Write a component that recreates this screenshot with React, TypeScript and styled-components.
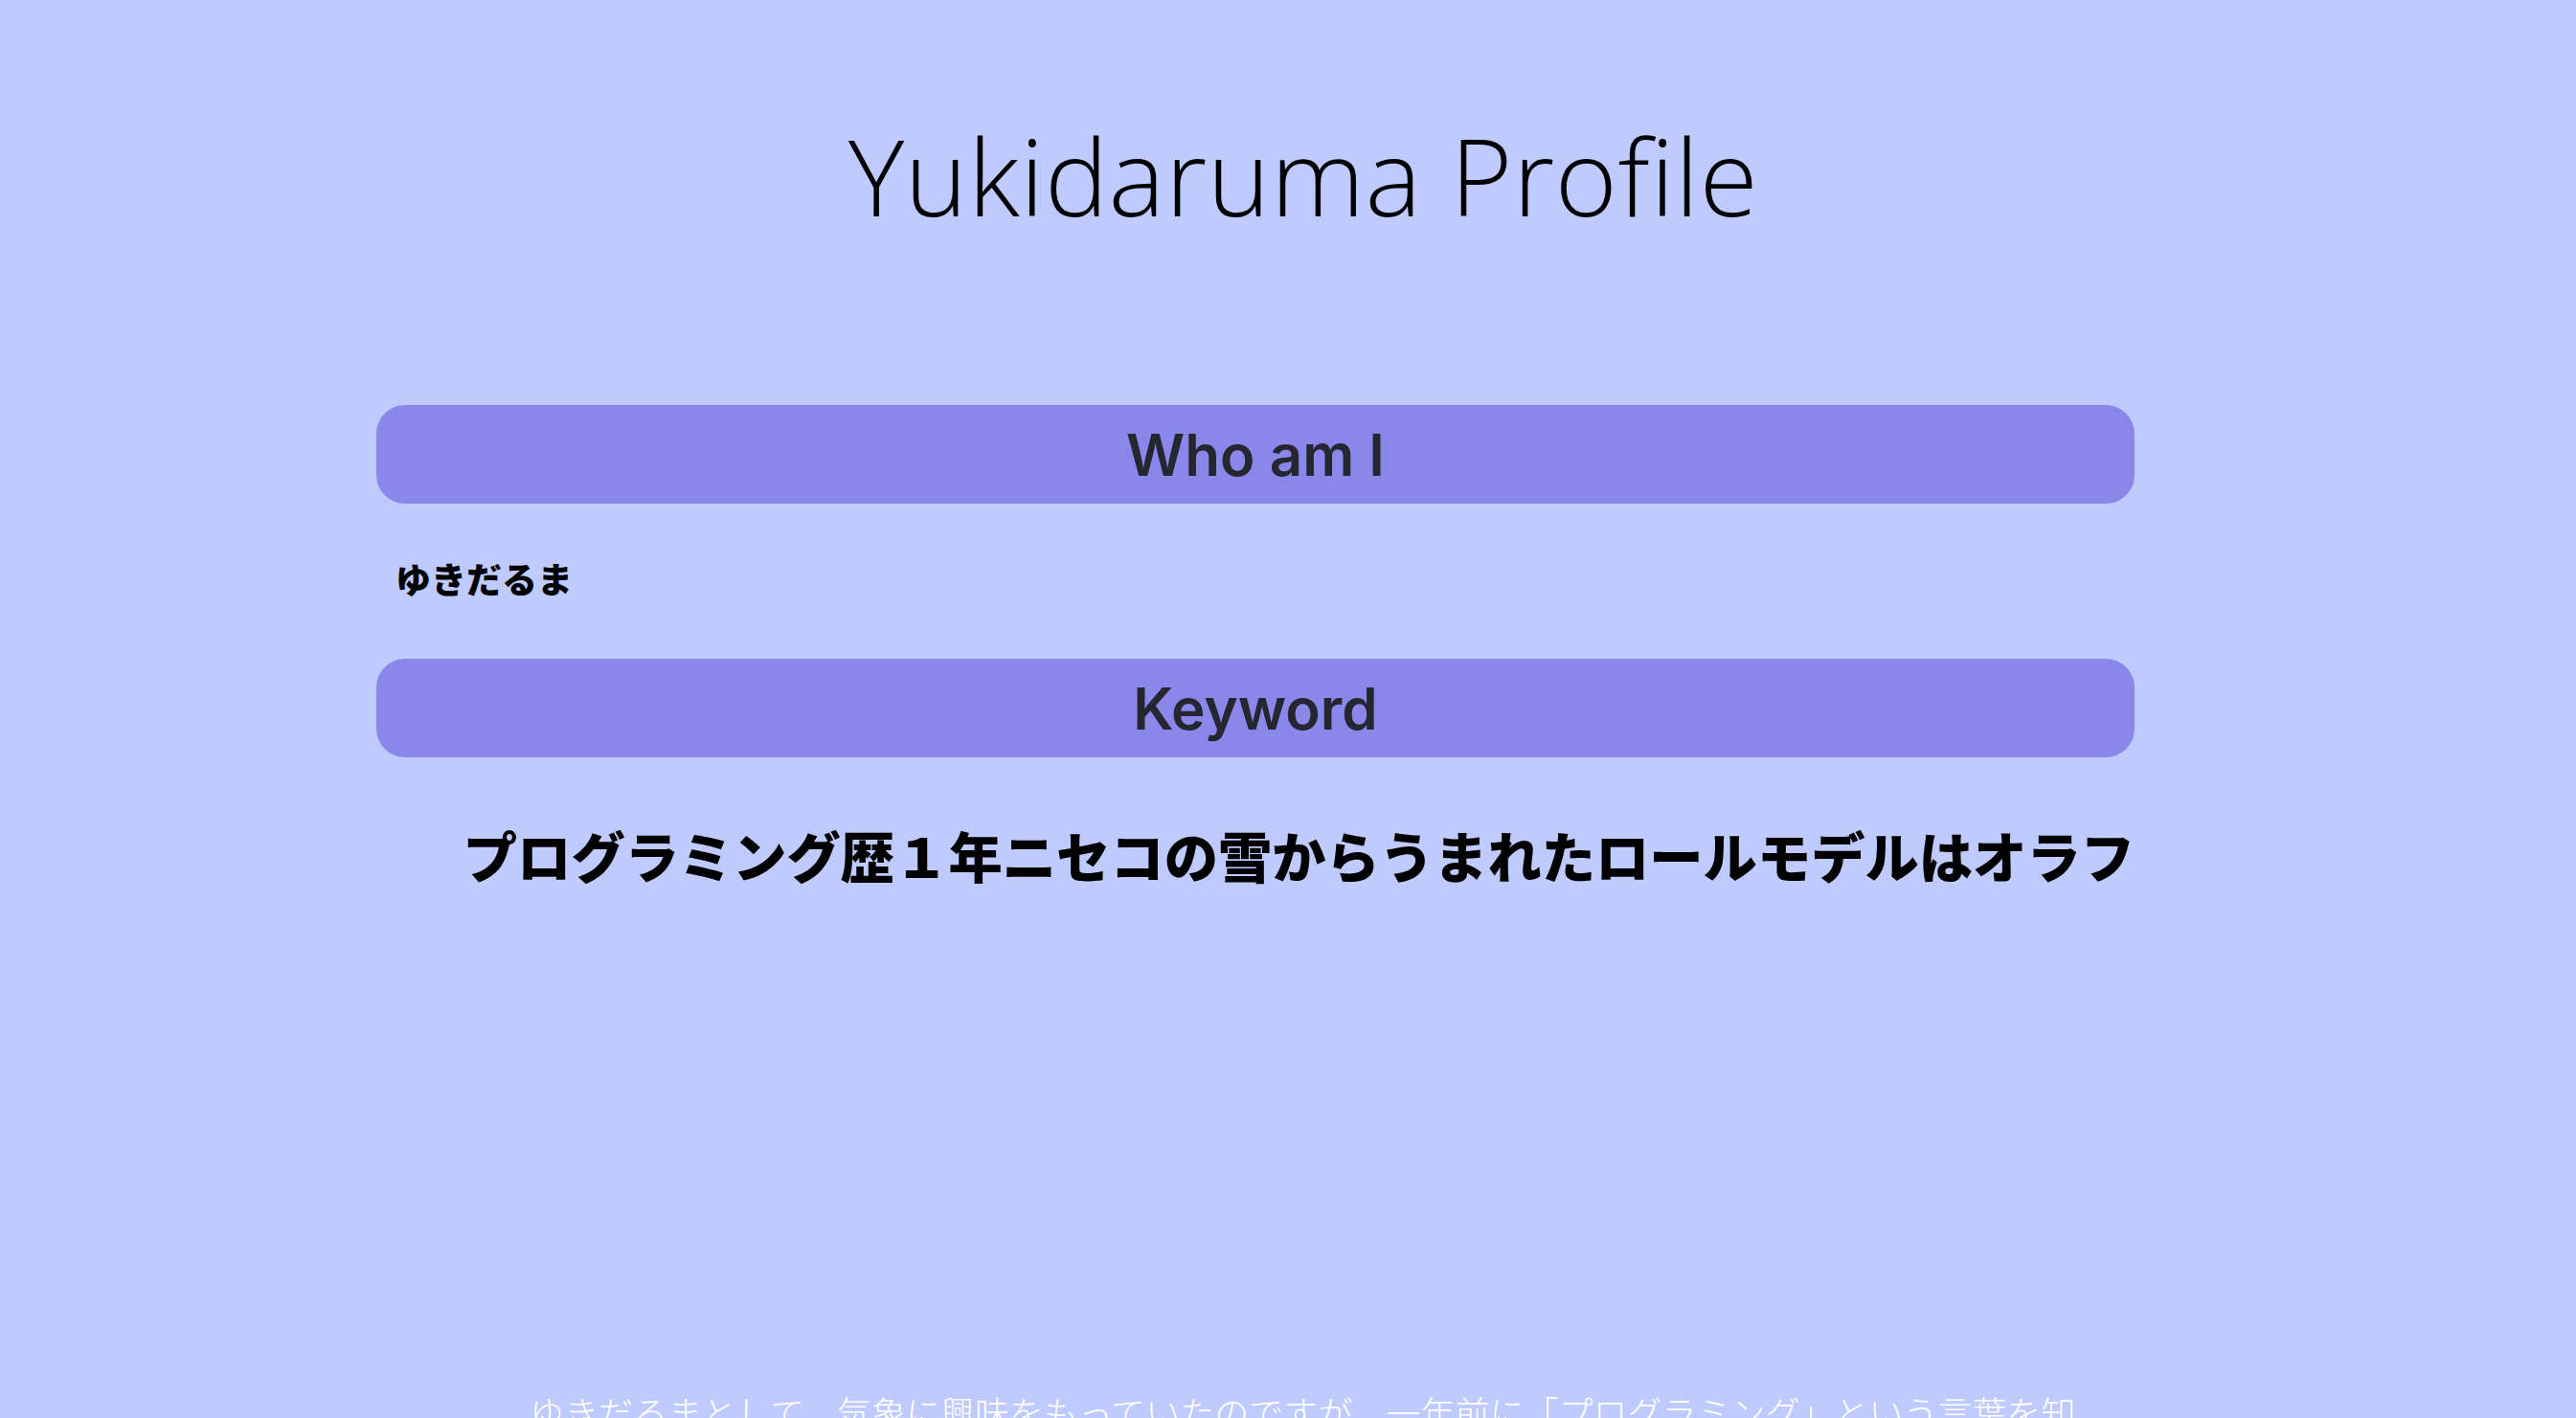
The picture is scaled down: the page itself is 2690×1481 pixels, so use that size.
import React from "react";
import styled, { createGlobalStyle } from "styled-components";

const Global = createGlobalStyle`
  html, body {
    margin: 0;
    padding: 0;
    background: #bfcaff;
  }
  body {
    font-family: "Noto Sans", "Noto Sans CJK JP", sans-serif;
    overflow: hidden;
  }
`;

const Page = styled.div`
  display: flex;
  flex-direction: column;
  min-height: 1481px;
  background: #bfcaff;
`;

const Title = styled.h1`
  margin: 0;
  padding: 117px 0 0 32px;
  text-align: center;
  font-family: "Open Sans", "Noto Sans", sans-serif;
  font-weight: 300;
  font-size: 111px;
  letter-spacing: 0.6px;
  line-height: 132px;
  color: #000;
`;

const Main = styled.main`
  display: flex;
  flex-direction: column;
  width: 1836px;
  margin: 174px 0 0 393px;
`;

const SectionBar = styled.h2<{ $gap?: number }>`
  margin: ${(p) => p.$gap ?? 0}px 0 0;
  height: 103px;
  display: flex;
  align-items: center;
  justify-content: center;
  background: #8a87eb;
  border-radius: 30px;
  font-family: "Inter", "Roboto", sans-serif;
  font-weight: 600;
  font-size: 60px;
  color: #25262f;
`;

const Name = styled.p`
  margin: 51px 0 0 20px;
  font-family: "Noto Sans CJK JP", sans-serif;
  font-weight: 800;
  font-size: 37px;
  line-height: 54px;
  color: #000;
`;

const Keywords = styled.p`
  margin: 60px 0 0;
  text-align: right;
  font-family: "Noto Sans CJK JP", sans-serif;
  font-weight: 900;
  font-size: 56.3px;
  line-height: 84px;
  color: #000;
  white-space: nowrap;
`;

const Story = styled.p`
  margin: 512px 0 0 553px;
  width: 1640px;
  font-family: "Noto Sans CJK JP", sans-serif;
  font-weight: 300;
  font-size: 36px;
  line-height: 54px;
  color: #ffffff;
`;

export default function App() {
  return (
    <Page>
      <Global />
      <Title>Yukidaruma Profile</Title>
      <Main>
        <SectionBar>Who am I</SectionBar>
        <Name>ゆきだるま</Name>
        <SectionBar $gap={57}>Keyword</SectionBar>
        <Keywords>プログラミング歴１年ニセコの雪からうまれたロールモデルはオラフ</Keywords>
      </Main>
      <Story>
        ゆきだるまとして、気象に興味をもっていたのですが、一年前に「プログラミング」という言葉を知り、興味をもつようになりました。雪の結晶のようにひとつひとつ違うコードの世界にひかれています。
      </Story>
    </Page>
  );
}
